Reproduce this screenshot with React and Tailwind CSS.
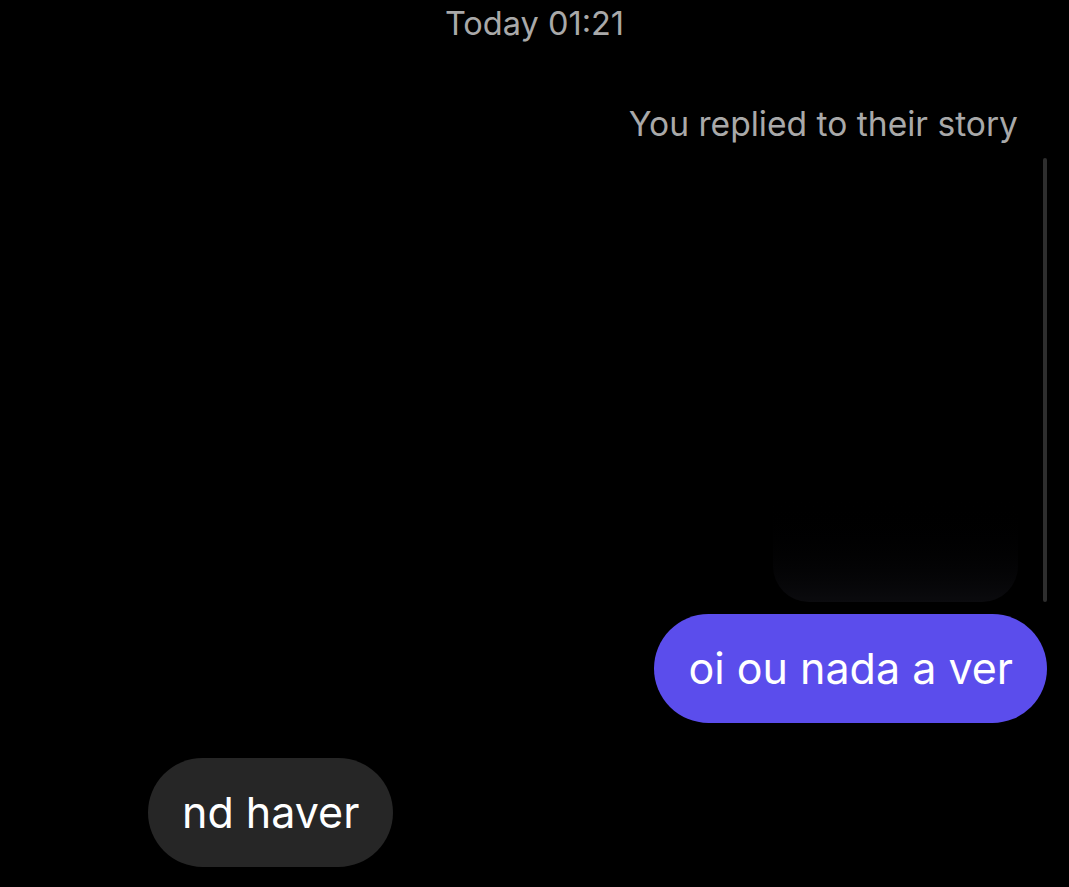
import React from 'react';

const font = { fontFamily: 'Inter, "Noto Sans", sans-serif' };

const App = () => {
  return (
    <div className="w-[1069px] h-[887px] bg-black overflow-hidden flex flex-col" style={font}>
      <div className="pt-[2px] text-center text-[32.5px] leading-[44px] text-[#a9a9a9]">Today 01:21</div>

      <div className="mt-[56px] pr-[51px] text-right text-[33.6px] leading-[44px] text-[#a9a9a9]">
        You replied to their story
      </div>

      <div className="mt-[12px] flex justify-end items-stretch pr-[22px]">
        <div className="w-[245px] h-[444px] rounded-b-[36px] bg-gradient-to-b from-black from-[75%] to-[#0b0b0e]" />
        <div className="ml-[25px] w-[4px] rounded-full bg-[#2e2e2e]" />
      </div>

      <div className="mt-[12px] flex justify-end pr-[22px]">
        <div className="h-[109px] px-[34px] rounded-full bg-[#5b4dec] flex items-center text-white text-[43px]">
          oi ou nada a ver
        </div>
      </div>

      <div className="mt-[35px] pl-[148px] flex">
        <div className="h-[109px] px-[34px] rounded-full bg-[#262626] flex items-center text-white text-[43px]">
          nd haver
        </div>
      </div>
    </div>
  );
};

export default App;
